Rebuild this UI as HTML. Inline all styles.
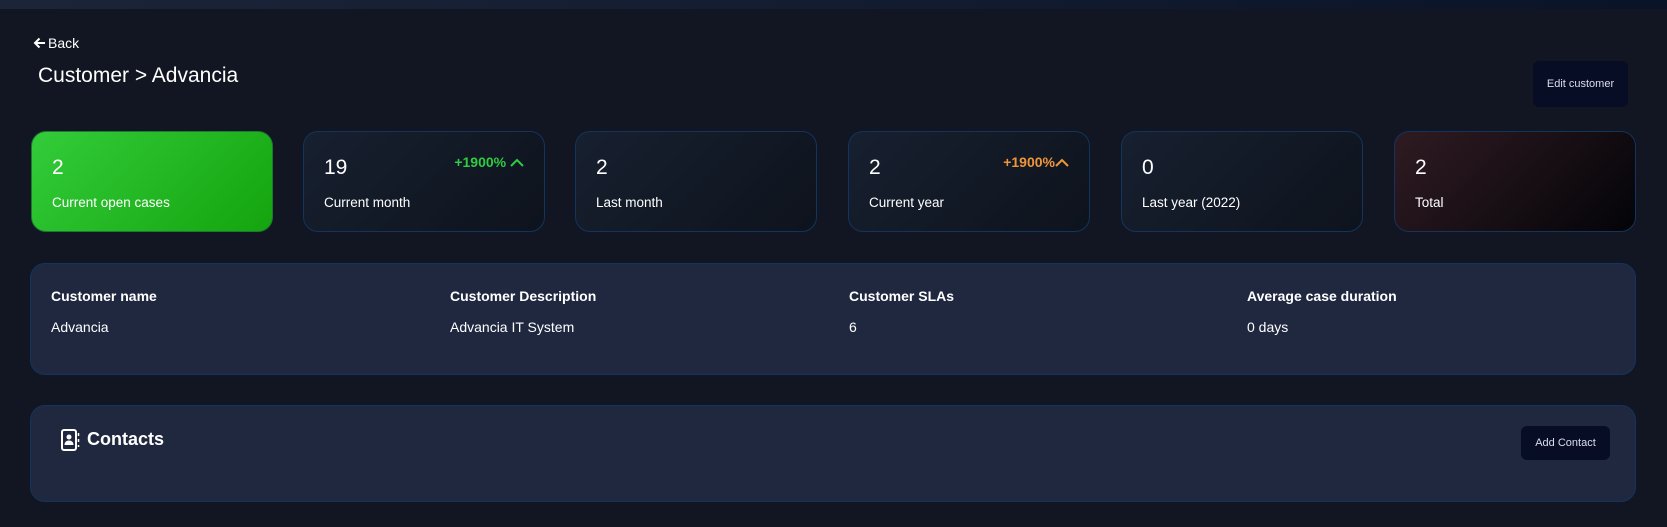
<!DOCTYPE html>
<html><head><meta charset="utf-8"><style>
*{box-sizing:border-box;margin:0;padding:0}
body{width:1667px;height:527px;background:#121622;font-family:"Liberation Sans",sans-serif;color:#fff;position:relative;overflow:hidden}
.top{position:absolute;left:0;top:0;width:1667px;height:9px;background:linear-gradient(90deg,#1c2438,#0a1428)}
.abs{position:absolute}
.card{position:absolute;top:131px;width:242px;height:101px;border:1px solid #12345e;border-radius:15px;background:linear-gradient(135deg,#172030,#0e131c)}
.card .n{position:absolute;left:20px;top:24px;font-size:21px}
.card .l{position:absolute;left:20px;top:63px;font-size:13.5px}
.pct{position:absolute;top:22px;right:20px;font-size:14px;font-weight:bold}
.panel{position:absolute;left:30px;width:1606px;border:1px solid #12345e;border-radius:15px;background:#202840}
.h{position:absolute;font-size:14px;font-weight:bold;top:24px}
.v{position:absolute;font-size:14px;top:55px}
.btn{position:absolute;background:#070d24;border-radius:6px;font-size:11px;color:#dde;display:flex;align-items:center;justify-content:center}
</style></head><body>
<div class="top"></div>
<svg class="abs" style="left:33px;top:37px" width="13" height="12" viewBox="0 0 13 12"><path d="M12 6H2M6.5 1.5L2 6l4.5 4.5" stroke="#fff" stroke-width="2" fill="none"/></svg>
<div class="abs" style="left:48px;top:35px;font-size:14px">Back</div>
<div class="abs" style="left:38px;top:64px;font-size:21px">Customer &gt; Advancia</div>
<div class="btn" style="left:1533px;top:61px;width:95px;height:46px">Edit customer</div>

<div class="card" style="left:31px;background:linear-gradient(135deg,#33cc3a,#14a40e);border-color:#1a7a30"><div class="n">2</div><div class="l">Current open cases</div></div>
<div class="card" style="left:303px"><div class="n">19</div><div class="l">Current month</div><div class="pct" style="color:#2ecc40">+1900% <svg width="14" height="9" viewBox="0 0 14 9"><path d="M1 8L7 2L13 8" stroke="#2ecc40" stroke-width="2" fill="none"/></svg></div></div>
<div class="card" style="left:575px"><div class="n">2</div><div class="l">Last month</div></div>
<div class="card" style="left:848px"><div class="n">2</div><div class="l">Current year</div><div class="pct" style="color:#f0963a">+1900%<svg width="14" height="9" viewBox="0 0 14 9"><path d="M1 8L7 2L13 8" stroke="#f0963a" stroke-width="2" fill="none"/></svg></div></div>
<div class="card" style="left:1121px"><div class="n">0</div><div class="l">Last year (2022)</div></div>
<div class="card" style="left:1394px;background:linear-gradient(135deg,#2f1b22,#030408)"><div class="n">2</div><div class="l">Total</div></div>

<div class="panel" style="top:263px;height:112px">
<div class="h" style="left:20px">Customer name</div><div class="v" style="left:20px">Advancia</div>
<div class="h" style="left:419px">Customer Description</div><div class="v" style="left:419px">Advancia IT System</div>
<div class="h" style="left:818px">Customer SLAs</div><div class="v" style="left:818px">6</div>
<div class="h" style="left:1216px">Average case duration</div><div class="v" style="left:1216px">0 days</div>
</div>
<div class="panel" style="top:405px;height:97px">
<svg class="abs" style="left:30px;top:23px" width="19" height="22" viewBox="0 0 19 22"><rect x="1" y="1" width="14" height="20" rx="2" fill="none" stroke="#fff" stroke-width="2"/><circle cx="8" cy="8" r="2.5" fill="#fff"/><path d="M3.5 16c0-3 2-4.5 4.5-4.5s4.5 1.5 4.5 4.5z" fill="#fff"/><path d="M17.5 4v3M17.5 10v3M17.5 16v2" stroke="#fff" stroke-width="1.5"/></svg>
<div class="abs" style="left:56px;top:23px;font-size:18px;font-weight:bold">Contacts</div>
<div class="btn" style="left:1490px;top:20px;width:89px;height:34px">Add Contact</div>
</div>
</body></html>
